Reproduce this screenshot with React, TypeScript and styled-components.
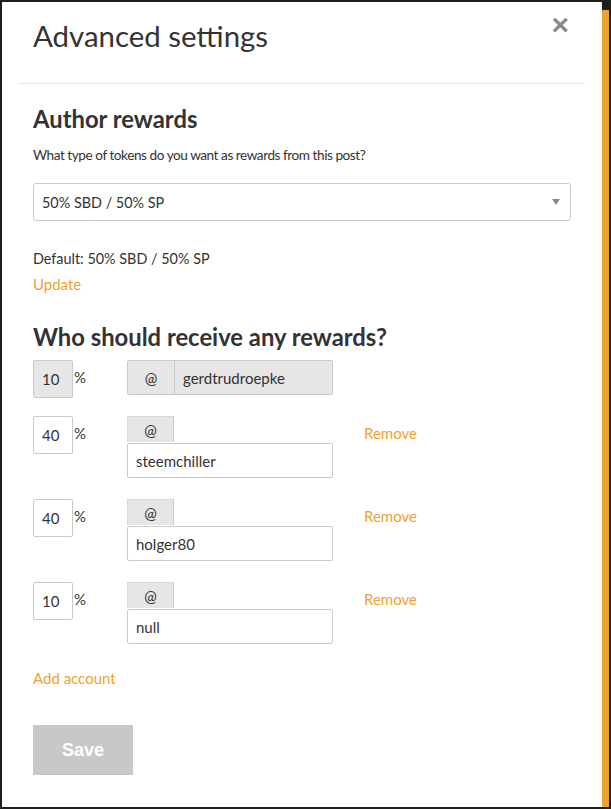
import styled, { createGlobalStyle } from 'styled-components';

const GlobalStyle = createGlobalStyle`
  html, body {
    margin: 0;
    padding: 0;
    background: #1e1e1e;
  }
  * {
    box-sizing: border-box;
  }
`;

const Frame = styled.div`
  display: flex;
  height: 809px;
  padding: 2px;
  font-family: Lato, 'Liberation Sans', sans-serif;
  color: #333;
`;

const Modal = styled.div`
  position: relative;
  width: 600px;
  height: 805px;
  background: #fff;
`;

const ScrollTrack = styled.div`
  width: 7px;
  margin-top: 8px;
  background: #f0a22f;
`;

const Header = styled.div`
  padding: 16px 31px 0;
  height: 81px;
`;

const Title = styled.h1`
  margin: 0;
  font-size: 29.4px;
  font-weight: 400;
  line-height: 36px;
  color: #333;
`;

const Close = styled.button`
  position: absolute;
  top: 8px;
  right: 33px;
  border: 0;
  background: none;
  padding: 0;
  font-family: 'Liberation Sans', sans-serif;
  font-size: 30px;
  line-height: 30px;
  font-weight: 700;
  color: #8a8a8a;
  cursor: pointer;
`;

const Divider = styled.hr`
  margin: 0 17px 0 16px;
  border: 0;
  border-top: 1px solid #e6e6e6;
`;

const Body = styled.div`
  padding: 20px 31px 0;
`;

const SectionTitle = styled.h2<{ $top?: number }>`
  margin: ${(p) => p.$top ?? 0}px 0 0;
  font-size: 23.8px;
  font-weight: 700;
  line-height: 30px;
  color: #333;
`;

const Text = styled.p<{ $top?: number }>`
  margin: ${(p) => p.$top ?? 0}px 0 0;
  font-size: 14.4px;
  line-height: 22px;
`;

const Question = styled.p`
  margin: 11px 0 0;
  font-size: 13.6px;
  letter-spacing: -0.45px;
  line-height: 20px;
`;

const Link = styled.a<{ $top?: number }>`
  display: block;
  width: fit-content;
  margin-top: ${(p) => p.$top ?? 0}px;
  font-size: 15px;
  line-height: 22px;
  color: #f0a22f;
  cursor: pointer;
`;

const SelectBox = styled.div`
  position: relative;
  margin-top: 18px;
  width: 538px;
  height: 38px;
  border: 1px solid #cacaca;
  border-radius: 3px;
  padding: 0 8px;
  display: flex;
  align-items: center;
  font-size: 14.4px;
`;

const Caret = styled.span`
  position: absolute;
  right: 10px;
  top: 15px;
  width: 0;
  height: 0;
  border-left: 4px solid transparent;
  border-right: 4px solid transparent;
  border-top: 6px solid #8a8a8a;
`;

const Row = styled.div<{ $top: number }>`
  display: flex;
  align-items: flex-start;
  margin-top: ${(p) => p.$top}px;
`;

const PercentCell = styled.div`
  display: flex;
  width: 94px;
`;

const PercentInput = styled.div<{ $disabled?: boolean }>`
  width: 40px;
  height: 38px;
  border: 1px solid #cacaca;
  border-radius: 2px;
  background: ${(p) => (p.$disabled ? '#e6e6e6' : '#fff')};
  padding: 0 8px;
  display: flex;
  align-items: center;
  font-size: 15px;
`;

const PercentSign = styled.span`
  margin: 7px 0 0 1px;
  font-size: 15px;
  line-height: 20px;
`;

const AccountCell = styled.div`
  width: 206px;
`;

const InlineGroup = styled.div`
  display: flex;
  height: 35px;
  border: 1px solid #cacaca;
  border-radius: 2px;
  background: #e6e6e6;
`;

const AtLabel = styled.div<{ $stacked?: boolean }>`
  width: 47px;
  height: ${(p) => (p.$stacked ? '26px' : '100%')};
  display: flex;
  align-items: center;
  justify-content: center;
  background: #e6e6e6;
  border: ${(p) => (p.$stacked ? '1px solid #d8d8d8' : '0')};
  border-right: 1px solid #cacaca;
  border-bottom: 0;
  font-size: 15px;
`;

const AccountInput = styled.div<{ $inline?: boolean }>`
  flex: 1;
  height: ${(p) => (p.$inline ? '100%' : '35px')};
  padding: 0 8px;
  display: flex;
  align-items: center;
  font-size: 15px;
  background: ${(p) => (p.$inline ? 'transparent' : '#fff')};
  border: ${(p) => (p.$inline ? '0' : '1px solid #cacaca')};
  border-radius: 2px;
  margin-top: ${(p) => (p.$inline ? '0' : '1px')};
`;

const Remove = styled.a`
  margin: 7px 0 0 31px;
  font-size: 15px;
  line-height: 20px;
  color: #f0a22f;
  cursor: pointer;
`;

const SaveButton = styled.button`
  display: block;
  margin-top: 36px;
  width: 100px;
  height: 50px;
  border: 0;
  background: #c7c8ca;
  color: #fff;
  font-family: 'Liberation Sans', Arial, sans-serif;
  font-size: 18px;
  font-weight: 700;
`;

const beneficiaries = [
  { pct: '40', name: 'steemchiller', top: 18 },
  { pct: '40', name: 'holger80', top: 21 },
  { pct: '10', name: 'null', top: 21 },
];

export default function App() {
  return (
    <>
      <GlobalStyle />
      <Frame>
        <Modal>
          <Header>
            <Title>Advanced settings</Title>
          </Header>
          <Close>×</Close>
          <Divider />
          <Body>
            <SectionTitle>Author rewards</SectionTitle>
            <Question>What type of tokens do you want as rewards from this post?</Question>
            <SelectBox>
              50% SBD / 50% SP
              <Caret />
            </SelectBox>
            <Text $top={27}>Default: 50% SBD / 50% SP</Text>
            <Link $top={3}>Update</Link>
            <SectionTitle $top={27}>Who should receive any rewards?</SectionTitle>
            <Row $top={8}>
              <PercentCell>
                <PercentInput $disabled>10</PercentInput>
                <PercentSign>%</PercentSign>
              </PercentCell>
              <AccountCell>
                <InlineGroup>
                  <AtLabel>@</AtLabel>
                  <AccountInput $inline>gerdtrudroepke</AccountInput>
                </InlineGroup>
              </AccountCell>
            </Row>
            {beneficiaries.map((b) => (
              <Row $top={b.top} key={b.name}>
                <PercentCell>
                  <PercentInput>{b.pct}</PercentInput>
                  <PercentSign>%</PercentSign>
                </PercentCell>
                <AccountCell>
                  <AtLabel $stacked>@</AtLabel>
                  <AccountInput>{b.name}</AccountInput>
                </AccountCell>
                <Remove>Remove</Remove>
              </Row>
            ))}
            <Link $top={23}>Add account</Link>
            <SaveButton>Save</SaveButton>
          </Body>
        </Modal>
        <ScrollTrack />
      </Frame>
    </>
  );
}
